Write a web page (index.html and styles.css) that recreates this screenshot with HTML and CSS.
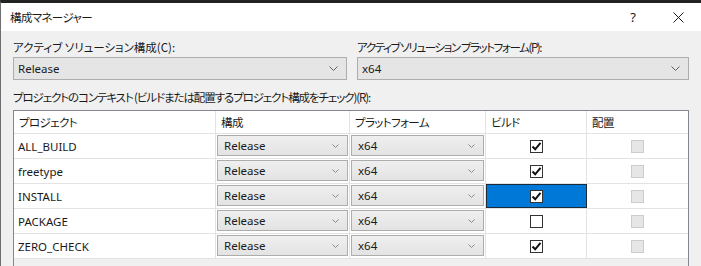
FILE: index.html
```html
<!DOCTYPE html>
<html lang="ja">
<head>
    <meta charset="UTF-8">
    <title>構成マネージャー</title>
    <link rel="stylesheet" href="styles.css">
</head>
<body>
    <div class="window">
        <!-- title bar -->
        <div class="titlebar">
            <span class="title">構成マネージャー</span>
            <span class="title-btn help">?</span>
            <span class="title-btn close">
                <svg width="11" height="11" viewBox="0 0 11 11"><path d="M0.5 0.5 L10.5 10.5 M10.5 0.5 L0.5 10.5" stroke="#1a1a1a" stroke-width="1"/></svg>
            </span>
        </div>

        <div class="content">
            <!-- solution settings -->
            <div class="solution-row">
                <div class="field">
                    <div class="label">アクティブ ソリューション構成(C):</div>
                    <div class="combo">
                        <span>Release</span>
                        <svg class="chev" width="9" height="5" viewBox="0 0 9 5"><path d="M0.5 0.5 L4.5 4.5 L8.5 0.5" fill="none" stroke="#606060"/></svg>
                    </div>
                </div>
                <div class="field">
                    <div class="label platform-label">アクティブ ソリューション プラットフォーム(P):</div>
                    <div class="combo">
                        <span>x64</span>
                        <svg class="chev" width="9" height="5" viewBox="0 0 9 5"><path d="M0.5 0.5 L4.5 4.5 L8.5 0.5" fill="none" stroke="#606060"/></svg>
                    </div>
                </div>
            </div>

            <div class="label context-label">プロジェクトのコンテキスト (ビルドまたは配置するプロジェクト構成をチェック)(R):</div>

            <!-- project grid -->
            <div class="grid" id="grid">
                <div class="grid-row header">
                    <div class="cell">プロジェクト</div>
                    <div class="cell">構成</div>
                    <div class="cell">プラットフォーム</div>
                    <div class="cell">ビルド</div>
                    <div class="cell">配置</div>
                </div>
            </div>
        </div>
    </div>

    <script>
        const projects = [
            { name: 'ALL_BUILD', build: true },
            { name: 'freetype', build: true },
            { name: 'INSTALL', build: true, selected: true },
            { name: 'PACKAGE', build: false },
            { name: 'ZERO_CHECK', build: true }
        ];

        const chevron = '<svg class="chev small" width="7" height="4" viewBox="0 0 7 4"><path d="M0.5 0.5 L3.5 3.5 L6.5 0.5" fill="none" stroke="#8a8a8a"/></svg>';
        const check = '<svg width="11" height="11" viewBox="0 0 11 11"><path d="M1.5 5.5 L4.2 8.3 L9.5 1.8" fill="none" stroke="#111" stroke-width="2"/></svg>';

        const grid = document.getElementById('grid');
        projects.forEach(p => {
            const row = document.createElement('div');
            row.className = 'grid-row';
            row.innerHTML = `
                <div class="cell name">${p.name}</div>
                <div class="cell"><div class="cell-combo"><span>Release</span>${chevron}</div></div>
                <div class="cell"><div class="cell-combo"><span>x64</span>${chevron}</div></div>
                <div class="cell center${p.selected ? ' selected' : ''}"><span class="checkbox">${p.build ? check : ''}</span></div>
                <div class="cell center"><span class="checkbox disabled"></span></div>
            `;
            grid.appendChild(row);
        });
    </script>
</body>
</html>
```

FILE: styles.css
```css
html, body {
    margin: 0;
    height: 100%;
    overflow: hidden;
}
body {
    font-family: 'Noto Sans', 'Noto Sans CJK JP', sans-serif;
    font-size: 11.5px;
    color: #1a1a1a;
    background: #f0f0f0;
}
.window {
    height: 100%;
    border-top: 3px solid #222222;
    border-left: 1px solid #6e6e6e;
    box-sizing: border-box;
    background: #f0f0f0;
}
.titlebar {
    height: 28px;
    background: #ffffff;
    display: flex;
    align-items: center;
    padding-left: 9px;
}
.title {
    flex: 1;
    font-family: 'Noto Sans CJK JP', sans-serif;
    font-size: 11.5px;
    font-feature-settings: "palt";
    letter-spacing: -0.6px;
}
.title-btn {
    display: flex;
    align-items: center;
    justify-content: center;
}
.help {
    width: 20px;
    margin-right: 12px;
    font-family: 'Noto Sans', sans-serif;
    font-size: 13px;
}
.close {
    width: 46px;
}
.content {
    padding: 8px 12px 0 12px;
}
.label {
    font-family: 'Noto Sans CJK JP', sans-serif;
    font-size: 11.5px;
    font-feature-settings: "palt";
    line-height: 16px;
    height: 16px;
    white-space: nowrap;
}
.platform-label {
    letter-spacing: -1.4px;
}
.solution-row {
    display: grid;
    grid-template-columns: 334px 332px;
    gap: 10px;
}
.combo {
    margin-top: 2px;
    height: 23px;
    box-sizing: border-box;
    border: 1px solid #adadad;
    background: #e5e5e5;
    display: flex;
    align-items: center;
    padding: 0 8px 0 4px;
}
.combo span, .cell-combo span {
    flex: 1;
}
.context-label {
    margin-top: 9px;
    letter-spacing: -1.1px;
}
.grid {
    margin-top: 5px;
    width: 676px;
    height: 200px;
    box-sizing: border-box;
    border: 1px solid #828790;
    background: #f0f0f0;
}
.grid-row {
    display: grid;
    grid-template-columns: 202px 134px 136px 101px 101px;
    height: 25px;
    background: #ffffff;
    border-bottom: 1px solid #e3e3e3;
    box-sizing: border-box;
}
.grid-row.header {
    height: 23px;
}
.cell {
    border-right: 1px solid #e3e3e3;
    display: flex;
    align-items: center;
    padding: 0 4px;
    min-width: 0;
}
.cell:last-child {
    border-right: none;
}
.header .cell {
    font-family: 'Noto Sans CJK JP', sans-serif;
    font-size: 11.5px;
    font-feature-settings: "palt";
    letter-spacing: -0.6px;
    padding-left: 5px;
}
.cell.center {
    justify-content: center;
}
.cell:has(.cell-combo) {
    padding: 1px 1px 2px 1px;
    align-items: stretch;
}
.cell-combo {
    flex: 1;
    border: 1px solid #adadad;
    background: linear-gradient(#efefef, #e3e3e3);
    display: flex;
    align-items: center;
    padding: 0 8px 0 6px;
}
.cell.selected {
    background: #0078d7;
    outline: 1px solid #1c2b3a;
    outline-offset: -1px;
}
.checkbox {
    width: 13px;
    height: 13px;
    box-sizing: border-box;
    border: 1px solid #333333;
    background: #ffffff;
    display: flex;
    align-items: center;
    justify-content: center;
}
.checkbox.disabled {
    border-color: #cccccc;
    background: #e6e6e6;
}
```
